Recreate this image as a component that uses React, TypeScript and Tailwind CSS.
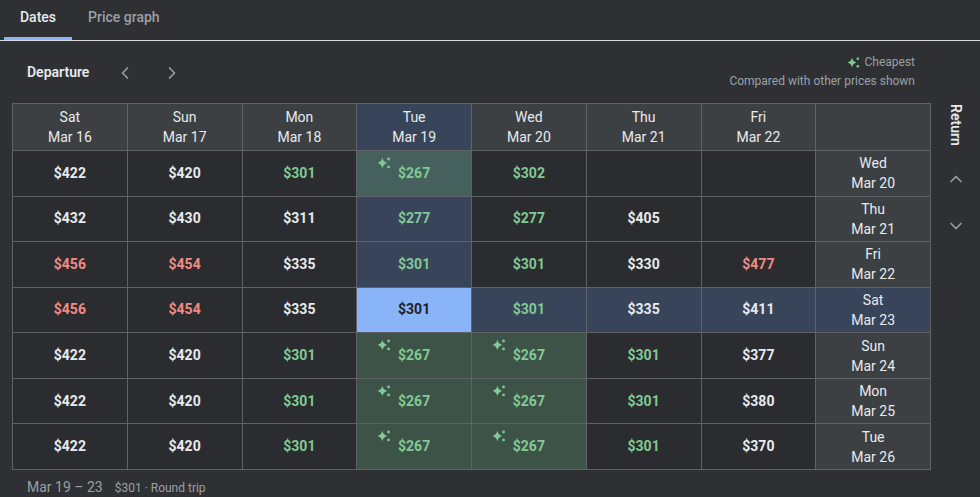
import React from 'react';
import { ChevronLeft, ChevronRight, ChevronUp, ChevronDown } from 'lucide-react';

type Tone = 'w' | 'g' | 'r';
type Bg = 'n' | 'b' | 't' | 'c' | 's';

interface Cell {
  price: string;
  tone: Tone;
  bg: Bg;
  star?: boolean;
}

const departures = [
  ['Sat', 'Mar 16'],
  ['Sun', 'Mar 17'],
  ['Mon', 'Mar 18'],
  ['Tue', 'Mar 19'],
  ['Wed', 'Mar 20'],
  ['Thu', 'Mar 21'],
  ['Fri', 'Mar 22'],
];

const c = (price: string, tone: Tone = 'w', bg: Bg = 'n', star = false): Cell => ({ price, tone, bg, star });

const rows: { day: string; date: string; active?: boolean; cells: Cell[] }[] = [
  { day: 'Wed', date: 'Mar 20', cells: [c('$422'), c('$420'), c('$301', 'g'), c('$267', 'g', 't', true), c('$302', 'g'), c(''), c('')] },
  { day: 'Thu', date: 'Mar 21', cells: [c('$432'), c('$430'), c('$311'), c('$277', 'g', 'b'), c('$277', 'g'), c('$405'), c('')] },
  { day: 'Fri', date: 'Mar 22', cells: [c('$456', 'r'), c('$454', 'r'), c('$335'), c('$301', 'g', 'b'), c('$301', 'g'), c('$330'), c('$477', 'r')] },
  {
    day: 'Sat',
    date: 'Mar 23',
    active: true,
    cells: [c('$456', 'r'), c('$454', 'r'), c('$335'), c('$301', 'w', 's'), c('$301', 'g', 'b'), c('$335', 'w', 'b'), c('$411', 'w', 'b')],
  },
  { day: 'Sun', date: 'Mar 24', cells: [c('$422'), c('$420'), c('$301', 'g'), c('$267', 'g', 'c', true), c('$267', 'g', 'c', true), c('$301', 'g'), c('$377')] },
  { day: 'Mon', date: 'Mar 25', cells: [c('$422'), c('$420'), c('$301', 'g'), c('$267', 'g', 'c', true), c('$267', 'g', 'c', true), c('$301', 'g'), c('$380')] },
  { day: 'Tue', date: 'Mar 26', cells: [c('$422'), c('$420'), c('$301', 'g'), c('$267', 'g', 'c', true), c('$267', 'g', 'c', true), c('$301', 'g'), c('$370')] },
];

const bgClass: Record<Bg, string> = {
  n: 'bg-[#2b2c2f]',
  b: 'bg-[#38445a]',
  t: 'bg-[#46615d]',
  c: 'bg-[#3e5347]',
  s: 'bg-[#8ab4f8]',
};

const toneClass: Record<Tone, string> = {
  w: 'text-[#e8eaed]',
  g: 'text-[#81c995]',
  r: 'text-[#f28b82]',
};

// little "cheapest" sparkle: one 4-point star and two dots
const Sparkle = ({ className = '' }: { className?: string }) => (
  <svg viewBox="0 0 14 14" className={className} fill="currentColor">
    <path d="M5 1.5 Q5.6 5.4 9.5 6.5 Q5.6 7.6 5 11.5 Q4.4 7.6 0.5 6.5 Q4.4 5.4 5 1.5 Z" />
    <circle cx="10.8" cy="2.8" r="1.3" />
    <circle cx="10.8" cy="10.2" r="1.3" />
  </svg>
);

export default function App() {
  return (
    <div className="w-[980px] h-[497px] overflow-hidden bg-[#2f3033] text-[#e8eaed] font-['Roboto',sans-serif]">
      {/* tabs */}
      <div className="flex h-[41px] border-b border-[#dadce0]">
        <div className="relative ml-[4px] w-[68px] flex items-center justify-center pb-[5px] text-[14px] font-medium text-[#e8eaed]">
          Dates
          <span className="absolute left-0 right-0 bottom-0 h-[3px] bg-[#8ab4f8]" />
        </div>
        <div className="flex items-center px-[16px] pb-[5px] text-[14px] font-medium text-[#9aa0a6]">Price graph</div>
      </div>

      <div className="pl-[12px]">
        <div className="flex h-[62px] w-[919px] items-center justify-between">
          <div className="flex items-center pl-[15px] pt-[1px]">
            <span className="text-[14px] font-semibold text-[#e8eaed]">Departure</span>
            <ChevronLeft className="ml-[26px] text-[#9aa0a6]" size={20} strokeWidth={2} />
            <ChevronRight className="ml-[27px] text-[#9aa0a6]" size={20} strokeWidth={2} />
          </div>
          <div className="flex flex-col items-end pr-[16px] text-[12px] text-[#9aa0a6] leading-[19px]">
            <div className="flex items-center gap-[3px]">
              <Sparkle className="w-[14px] h-[14px] text-[#81c995]" />
              <span>Cheapest</span>
            </div>
            <span>Compared with other prices shown</span>
          </div>
        </div>

        <div className="flex">
          <div className="grid w-[919px] h-[367px] grid-cols-8 grid-rows-[46px_repeat(7,1fr)] gap-px bg-[#5f6368] p-px">
            {departures.map(([d, m], i) => (
              <div
                key={d}
                className={`flex flex-col items-center justify-center text-[14px] leading-[20px] text-[#e8eaed] ${i === 3 ? 'bg-[#38445a]' : 'bg-[#3c4043]'}`}
              >
                <span>{d}</span>
                <span>{m}</span>
              </div>
            ))}
            <div className="bg-[#3c4043]" />

            {rows.map((row) => (
              <React.Fragment key={row.date}>
                {row.cells.map((cell, i) => (
                  <div
                    key={i}
                    className={`relative flex items-center justify-center text-[14px] font-bold ${bgClass[cell.bg]} ${cell.bg === 's' ? 'text-[#202124]' : toneClass[cell.tone]}`}
                  >
                    {cell.star && <Sparkle className="absolute left-[20px] top-[5px] w-[15px] h-[15px] text-[#81c995]" />}
                    {cell.price}
                  </div>
                ))}
                <div
                  className={`flex flex-col items-center justify-center text-[14px] leading-[20px] text-[#e8eaed] ${row.active ? 'bg-[#38445a]' : 'bg-[#3c4043]'}`}
                >
                  <span>{row.day}</span>
                  <span>{row.date}</span>
                </div>
              </React.Fragment>
            ))}
          </div>

          <div className="flex flex-1 flex-col items-center pt-[1px]">
            <span className="[writing-mode:vertical-rl] text-[14px] font-semibold text-[#e8eaed] h-[46px] flex items-center">Return</span>
            <ChevronUp className="mt-[19px] text-[#9aa0a6]" size={20} />
            <ChevronDown className="mt-[27px] text-[#9aa0a6]" size={20} />
          </div>
        </div>

        <div className="flex items-baseline pl-[15px] pt-[7px] text-[#9aa0a6]">
          <span className="text-[14px]">Mar 19 – 23</span>
          <span className="ml-[12px] text-[12px]">$301 · Round trip</span>
        </div>
      </div>
    </div>
  );
}
